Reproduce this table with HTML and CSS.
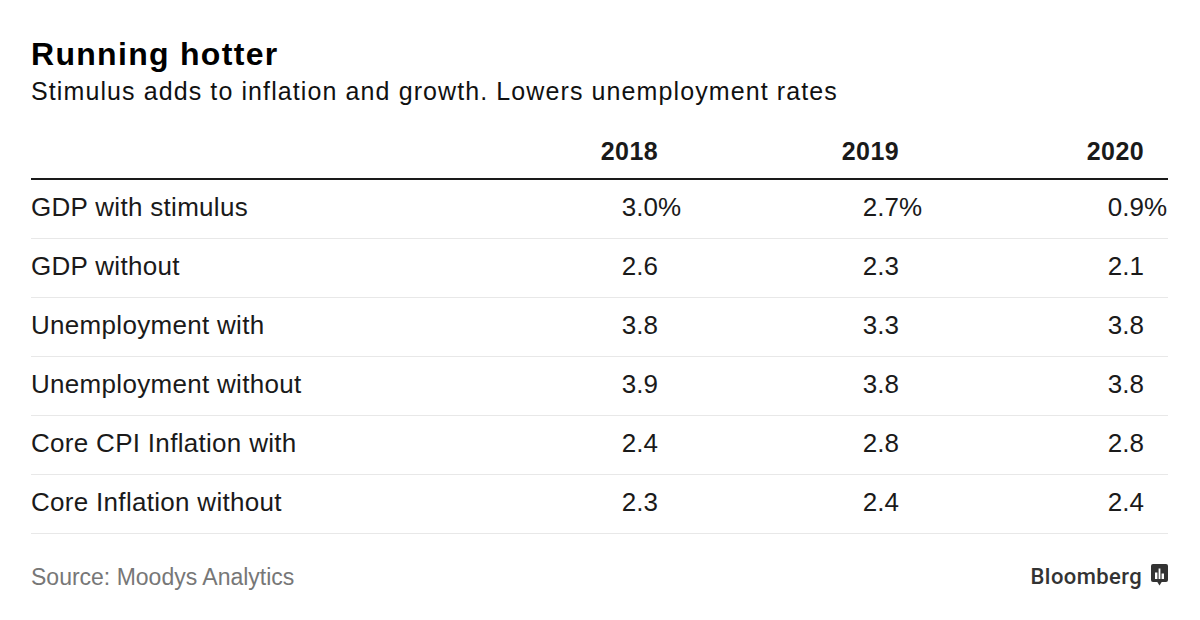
FILE: index.html
```html
<!DOCTYPE html>
<html lang="en">
<head>
<meta charset="utf-8">
<title>Running hotter</title>
<link rel="stylesheet" href="styles.css">
</head>
<body>
<div class="chart">
  <h1 class="title">Running hotter</h1>
  <p class="subtitle">Stimulus adds to inflation and growth. Lowers unemployment rates</p>
  <div class="table">
    <div class="row head">
      <div class="cell label"></div>
      <div class="cell num">2018</div>
      <div class="cell num">2019</div>
      <div class="cell num">2020</div>
    </div>
    <div class="row">
      <div class="cell label">GDP with stimulus</div>
      <div class="cell num">3.0<span class="pct">%</span></div>
      <div class="cell num">2.7<span class="pct">%</span></div>
      <div class="cell num">0.9<span class="pct">%</span></div>
    </div>
    <div class="row">
      <div class="cell label">GDP without</div>
      <div class="cell num">2.6</div>
      <div class="cell num">2.3</div>
      <div class="cell num">2.1</div>
    </div>
    <div class="row">
      <div class="cell label">Unemployment with</div>
      <div class="cell num">3.8</div>
      <div class="cell num">3.3</div>
      <div class="cell num">3.8</div>
    </div>
    <div class="row">
      <div class="cell label">Unemployment without</div>
      <div class="cell num">3.9</div>
      <div class="cell num">3.8</div>
      <div class="cell num">3.8</div>
    </div>
    <div class="row">
      <div class="cell label">Core CPI Inflation with</div>
      <div class="cell num">2.4</div>
      <div class="cell num">2.8</div>
      <div class="cell num">2.8</div>
    </div>
    <div class="row">
      <div class="cell label">Core Inflation without</div>
      <div class="cell num">2.3</div>
      <div class="cell num">2.4</div>
      <div class="cell num">2.4</div>
    </div>
  </div>
  <div class="footer">
    <span class="source">Source: Moodys Analytics</span>
    <span class="brand">Bloomberg
      <svg class="brand-icon" width="17" height="22" viewBox="0 0 17 22" aria-hidden="true">
        <rect x="0" y="0" width="17" height="18" rx="2" fill="#333"/>
        <polygon points="6,17.5 11,17.5 8.5,21.5" fill="#333"/>
        <rect x="4" y="8.5" width="2.4" height="6.5" fill="#fff"/>
        <rect x="7.6" y="4.5" width="1.8" height="10.5" fill="#fff"/>
        <rect x="10.6" y="9.5" width="2.4" height="5.5" fill="#fff"/>
      </svg>
    </span>
  </div>
</div>
</body>
</html>
```

FILE: styles.css
```css
* { box-sizing: border-box; }

html, body {
  margin: 0;
  padding: 0;
  background: #fff;
}

body {
  font-family: "Liberation Sans", Arial, Helvetica, sans-serif;
  color: #1a1a1a;
}

.chart {
  width: 1200px;
  height: 620px;
  padding: 36px 32px 0 31px;
}

.title {
  margin: 0;
  font-size: 32px;
  line-height: 36px;
  font-weight: 700;
  letter-spacing: 1.3px;
  color: #000;
}

.subtitle {
  margin: 5px 0 0;
  font-size: 25px;
  line-height: 28px;
  letter-spacing: 1.1px;
  color: #111;
}

.table {
  margin-top: 31px;
}

.row {
  display: grid;
  grid-template-columns: 1fr 241px 241px 245px;
  border-bottom: 1px solid #e8e8e8;
}

.row.head {
  border-bottom: 2px solid #1a1a1a;
  padding-bottom: 12px;
}

.row.head .cell {
  font-size: 25px;
  font-weight: 700;
  line-height: 30px;
  padding-bottom: 0;
  letter-spacing: 0.4px;
}

.cell {
  font-size: 26px;
  line-height: 54px;
  padding-bottom: 4px;
  white-space: nowrap;
  letter-spacing: 0.3px;
}

.num {
  text-align: right;
  padding-right: 24px;
  letter-spacing: 0;
}

.pct {
  margin-right: -0.889em;
}

.footer {
  display: flex;
  justify-content: space-between;
  align-items: center;
  margin-top: 29px;
}

.source {
  font-size: 23px;
  line-height: 28px;
  color: #777;
}

.brand {
  display: flex;
  align-items: flex-start;
  gap: 9px;
  font-family: Roboto, "Liberation Sans", sans-serif;
  font-size: 22px;
  line-height: 26px;
  font-weight: 500;
  letter-spacing: 0.4px;
  color: #333;
  margin-right: 0;
}

.brand-icon {
  display: block;
  margin-top: 0;
}
```
